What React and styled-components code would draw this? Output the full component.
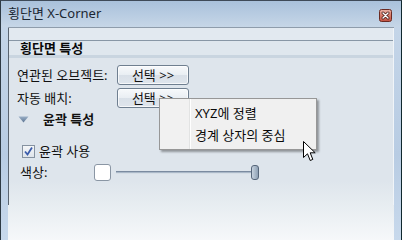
import React from "react";
import styled, { createGlobalStyle } from "styled-components";

const GlobalStyle = createGlobalStyle`
  html, body {
    margin: 0;
    padding: 0;
    background: #ffffff;
  }
  body {
    font-family: "Noto Sans", "Noto Sans CJK KR", sans-serif;
    font-size: 13px;
    color: #111111;
  }
`;

function CloseIcon() {
  return (
    <svg width="13" height="13" viewBox="0 0 13 13">
      <defs>
        <linearGradient id="closeBg" x1="0" y1="0" x2="0" y2="1">
          <stop offset="0" stopColor="#eab4a8" />
          <stop offset="0.5" stopColor="#d87a68" />
          <stop offset="1" stopColor="#c05040" />
        </linearGradient>
      </defs>
      <rect x="0.5" y="0.5" width="12" height="12" rx="2" fill="url(#closeBg)" stroke="#6a2a22" />
      <path d="M4 4 L9 9 M9 4 L4 9" stroke="#4a1a14" strokeWidth="3" strokeLinecap="round" />
      <path d="M4 4 L9 9 M9 4 L4 9" stroke="#ffffff" strokeWidth="1.4" strokeLinecap="round" />
    </svg>
  );
}

function Triangle() {
  return (
    <svg width="11" height="7" viewBox="0 0 11 7">
      <defs>
        <linearGradient id="triBg" x1="0" y1="0" x2="0" y2="1">
          <stop offset="0" stopColor="#9aafc6" />
          <stop offset="1" stopColor="#5d7694" />
        </linearGradient>
      </defs>
      <polygon points="0.5,0.5 10.5,0.5 5.5,6.5" fill="url(#triBg)" />
    </svg>
  );
}

function CheckMark() {
  return (
    <svg width="11" height="11" viewBox="0 0 11 11">
      <path d="M2 5.5 L4.5 8.5 L9 1.5" fill="none" stroke="#3b5cab" strokeWidth="1.8" />
    </svg>
  );
}

function Cursor() {
  return (
    <svg width="14" height="21" viewBox="0 0 14 21">
      <path
        d="M0.5 0.5 L0.5 16.5 L4.5 12.8 L7.2 19.5 L9.8 18.4 L7.2 11.8 L12.2 11.8 Z"
        fill="#ffffff"
        stroke="#000000"
        strokeWidth="1"
      />
    </svg>
  );
}

export default function App() {
  return (
    <>
      <GlobalStyle />
      <Window>
        <TitleBar>
          <Title>횡단면 X-Corner</Title>
          <CloseButton>
            <CloseIcon />
          </CloseButton>
        </TitleBar>
        <Body>
          <Frame />
          <Client>
            <Panel>
              <TopBand />
              <SectionHeader>횡단면 특성</SectionHeader>
              <HeaderShade />
              <Content>
                <Row>
                  <Label>연관된 오브젝트:</Label>
                  <Button>선택 &gt;&gt;</Button>
                </Row>
                <Row>
                  <Label>자동 배치:</Label>
                  <Button>선택 &gt;&gt;</Button>
                </Row>
                <GroupTitle>
                  <Triangle />
                  <span>윤곽 특성</span>
                </GroupTitle>
                <CheckRow>
                  <CheckBox>
                    <CheckMark />
                  </CheckBox>
                  <span>윤곽 사용</span>
                </CheckRow>
                <ColorRow>
                  <ColorLabel>색상:</ColorLabel>
                  <Swatch />
                  <Slider>
                    <Track />
                    <Thumb />
                  </Slider>
                </ColorRow>
              </Content>
            </Panel>
          </Client>
          <Frame />
        </Body>
        <Menu>
          <MenuItem>XYZ에 정렬</MenuItem>
          <MenuItem>경계 상자의 중심</MenuItem>
        </Menu>
        <CursorSpot>
          <Cursor />
        </CursorSpot>
      </Window>
    </>
  );
}

const Window = styled.div`
  position: relative;
  width: 402px;
  height: 240px;
  box-sizing: border-box;
  display: flex;
  flex-direction: column;
  border-top: 1px solid #3e4a58;
  border-left: 1px solid #2e3a44;
  border-right: 1px solid #10282e;
  background: #b6cbe2;
  overflow: hidden;
`;

const TitleBar = styled.div`
  height: 26px;
  display: flex;
  align-items: center;
  justify-content: space-between;
  padding: 0 9px 0 7px;
  background: linear-gradient(#a9c1db, #c6d6e7);
`;

const Title = styled.div`
  line-height: 15px;
  color: #1b2733;
  margin-top: -2px;
`;

const CloseButton = styled.div`
  width: 13px;
  height: 13px;
  display: flex;
  margin-top: 2px;
`;

const Body = styled.div`
  flex: 1;
  display: flex;
`;

const Frame = styled.div`
  width: 7px;
  background: linear-gradient(#c4d5e8, #b8cce3 60%, #c8d9ec);
`;

const Client = styled.div`
  width: 386px;
  display: flex;
  flex-direction: column;
  border-top: 1px solid #8e9cab;
  background: linear-gradient(#dee5ec 0%, #dee5ec 72%, #e6ecf0 82%, #f6f8fa 100%);
`;

const Panel = styled.div`
  height: 177px;
  display: flex;
  flex-direction: column;
  border-left: 1px solid #5a6470;
  border-right: 1px solid #f0f4f8;
`;

const TopBand = styled.div`
  height: 12px;
  background: #e2e9f0;
  border-bottom: 1px solid #8897a6;
`;

const SectionHeader = styled.div`
  height: 14px;
  padding-left: 11px;
  line-height: 15px;
  font-weight: 700;
  color: #0a0a0a;
  background: #dfe7ee;
`;

const HeaderShade = styled.div`
  height: 3px;
  background: #c9d5e0;
`;

const Content = styled.div`
  display: flex;
  flex-direction: column;
  padding-top: 7px;
`;

const Row = styled.div`
  display: flex;
  align-items: center;
  height: 20px;
  padding-left: 8px;
  margin-bottom: 3px;
`;

const Label = styled.div`
  width: 100px;
  line-height: 15px;
`;

const Button = styled.div`
  width: 70px;
  height: 18px;
  box-sizing: content-box;
  display: flex;
  align-items: center;
  justify-content: center;
  border: 1px solid #6f7f90;
  border-radius: 3px;
  background: linear-gradient(#f7f9fb, #e9eef3 50%, #d9e0e8 51%, #dfe5ec);
  box-shadow: inset 0 0 0 1px rgba(255, 255, 255, 0.7);
  line-height: 15px;
  color: #111111;
`;

const GroupTitle = styled.div`
  display: flex;
  align-items: center;
  height: 16px;
  padding-left: 9px;
  margin-top: 0;
  font-weight: 700;
  line-height: 15px;

  span {
    margin-left: 14px;
  }
`;

const CheckRow = styled.div`
  display: flex;
  align-items: center;
  height: 15px;
  padding-left: 13px;
  margin-top: 17px;
  line-height: 15px;

  span {
    margin-left: 4px;
  }
`;

const CheckBox = styled.div`
  width: 11px;
  height: 11px;
  display: flex;
  border: 1px solid #8692a0;
  background: linear-gradient(#f4f6f8, #dfe4ea);
`;

const ColorRow = styled.div`
  display: flex;
  align-items: center;
  height: 17px;
  padding-left: 11px;
  margin-top: 5px;
`;

const ColorLabel = styled.div`
  width: 74px;
  line-height: 15px;
`;

const Swatch = styled.div`
  width: 15px;
  height: 15px;
  border: 1px solid #8a96a4;
  border-radius: 3px;
  background: #ffffff;
`;

const Slider = styled.div`
  position: relative;
  width: 143px;
  height: 17px;
  margin-left: 5px;
  display: flex;
  align-items: center;
`;

const Track = styled.div`
  width: 100%;
  height: 3px;
  box-sizing: border-box;
  border-top: 1px solid #7b8ba0;
  background: #aab8c8;
  border-bottom: 1px solid #d6dee6;
`;

const Thumb = styled.div`
  position: absolute;
  left: 135px;
  top: 1px;
  width: 6px;
  height: 13px;
  border: 1px solid #56667a;
  border-radius: 3px;
  background: linear-gradient(90deg, #c6d2de, #8ea0b4);
`;

const Menu = styled.div`
  position: absolute;
  left: 158px;
  top: 97px;
  width: 156px;
  height: 47px;
  padding-top: 3px;
  box-sizing: content-box;
  border: 1px solid #979797;
  background: linear-gradient(90deg, #f1f1f1 0, #f1f1f1 29px, #e2e3e3 29px, #e2e3e3 30px, #ffffff 30px, #ffffff 31px, #f0f0f0 31px);
  box-shadow: 2px 2px 2px rgba(0, 0, 0, 0.35);
`;

const MenuItem = styled.div`
  height: 22px;
  display: flex;
  align-items: center;
  padding-left: 35px;
  line-height: 15px;
  color: #0a0a0a;
`;

const CursorSpot = styled.div`
  position: absolute;
  left: 302px;
  top: 140px;
  width: 14px;
  height: 21px;
  display: flex;
`;
